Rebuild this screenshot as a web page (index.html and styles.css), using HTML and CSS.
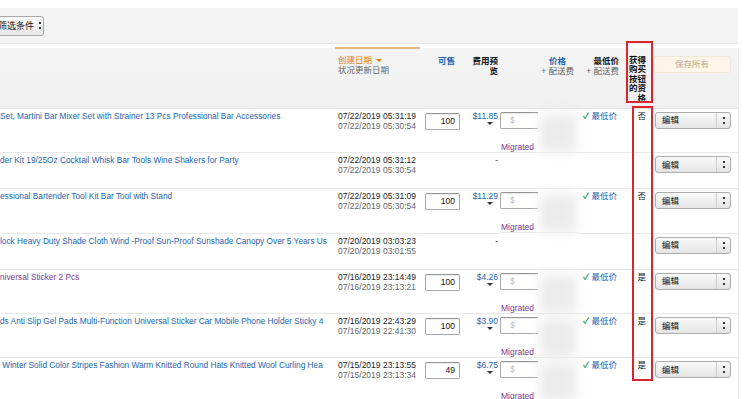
FILE: index.html
```html
<!DOCTYPE html>
<html lang="zh-CN">
<head>
    <meta charset="UTF-8">
    <title>管理库存</title>
    <link rel="stylesheet" href="styles.css">
</head>
<body>
    <div class="page">
        <!-- 工具栏 -->
        <div class="toolbar">
            <div class="filter">筛选条件 <span class="updown"></span></div>
        </div>

        <table class="grid">
            <colgroup>
                <col class="c-title"><col class="c-date"><col class="c-avail"><col class="c-fee">
                <col class="c-price"><col class="c-min"><col class="c-buy"><col class="c-act">
            </colgroup>
            <thead>
                <tr>
                    <th class="title"></th>
                    <th class="date"><span class="sort">创建日期 <i class="caret"></i></span><br><span class="sub">状况更新日期</span></th>
                    <th class="avail"><span class="link">可售</span></th>
                    <th class="fee">费用预<br>览</th>
                    <th class="price"><div class="stack"><span class="link">价格</span><br><span class="sub">+ 配送费</span></div></th>
                    <th class="min">最低价<br><span class="sub">+ 配送费</span></th>
                    <th class="buy">获得<br>购买<br>按钮<br>的资<br>格</th>
                    <th class="act"><div class="save">保存所有</div></th>
                </tr>
            </thead>
            <tbody>
                <tr class="tall">
                    <td><div class="name">Set, Martini Bar Mixer Set with Strainer 13 Pcs Professional Bar Accessories</div></td>
                    <td class="date"><div>07/22/2019 05:31:19</div><div class="old">07/22/2019 05:30:54</div></td>
                    <td class="avail"><div class="box">100</div></td>
                    <td class="fee"><div class="link">$11.85</div><div class="drop"><i class="caret dark"></i></div></td>
                    <td class="price"><div class="pcol"><div class="box money">$</div><div class="migrated">Migrated</div></div><div class="blur"></div></td>
                    <td class="min"><span class="tick">✓</span> <span class="link">最低价</span></td>
                    <td class="buy">否</td>
                    <td class="act"><div class="select"><span>编辑</span><b class="updown"></b></div></td>
                </tr>
                <tr class="short">
                    <td><div class="name">der Kit 19/25Oz Cocktail Whisk Bar Tools Wine Shakers for Party</div></td>
                    <td class="date"><div>07/22/2019 05:31:12</div><div class="old">07/22/2019 05:30:54</div></td>
                    <td class="avail"></td>
                    <td class="fee">-</td>
                    <td class="price"></td>
                    <td class="min"></td>
                    <td class="buy"></td>
                    <td class="act"><div class="select"><span>编辑</span><b class="updown"></b></div></td>
                </tr>
                <tr class="tall">
                    <td><div class="name">essional Bartender Tool Kit Bar Tool with Stand</div></td>
                    <td class="date"><div>07/22/2019 05:31:09</div><div class="old">07/22/2019 05:30:54</div></td>
                    <td class="avail"><div class="box">100</div></td>
                    <td class="fee"><div class="link">$11.29</div><div class="drop"><i class="caret dark"></i></div></td>
                    <td class="price"><div class="pcol"><div class="box money">$</div><div class="migrated">Migrated</div></div><div class="blur"></div></td>
                    <td class="min"><span class="tick">✓</span> <span class="link">最低价</span></td>
                    <td class="buy">否</td>
                    <td class="act"><div class="select"><span>编辑</span><b class="updown"></b></div></td>
                </tr>
                <tr class="short">
                    <td><div class="name">lock Heavy Duty Shade Cloth Wind -Proof Sun-Proof Sunshade Canopy Over 5 Years Us</div></td>
                    <td class="date"><div>07/20/2019 03:03:23</div><div class="old">07/20/2019 03:01:55</div></td>
                    <td class="avail"></td>
                    <td class="fee">-</td>
                    <td class="price"></td>
                    <td class="min"></td>
                    <td class="buy"></td>
                    <td class="act"><div class="select"><span>编辑</span><b class="updown"></b></div></td>
                </tr>
                <tr class="tall">
                    <td><div class="name visited">niversal Sticker 2 Pcs</div></td>
                    <td class="date"><div>07/16/2019 23:14:49</div><div class="old">07/16/2019 23:13:21</div></td>
                    <td class="avail"><div class="box">100</div></td>
                    <td class="fee"><div class="link">$4.26</div><div class="drop"><i class="caret dark"></i></div></td>
                    <td class="price"><div class="pcol"><div class="box money">$</div><div class="migrated">Migrated</div></div><div class="blur"></div></td>
                    <td class="min"><span class="tick">✓</span> <span class="link">最低价</span></td>
                    <td class="buy">是</td>
                    <td class="act"><div class="select"><span>编辑</span><b class="updown"></b></div></td>
                </tr>
                <tr class="tall">
                    <td><div class="name">ds Anti Slip Gel Pads Multi-Function Universal Sticker Car Mobile Phone Holder Sticky 4</div></td>
                    <td class="date"><div>07/16/2019 22:43:29</div><div class="old">07/16/2019 22:41:30</div></td>
                    <td class="avail"><div class="box">100</div></td>
                    <td class="fee"><div class="link">$3.90</div><div class="drop"><i class="caret dark"></i></div></td>
                    <td class="price"><div class="pcol"><div class="box money">$</div><div class="migrated">Migrated</div></div><div class="blur"></div></td>
                    <td class="min"><span class="tick">✓</span> <span class="link">最低价</span></td>
                    <td class="buy">是</td>
                    <td class="act"><div class="select"><span>编辑</span><b class="updown"></b></div></td>
                </tr>
                <tr class="tall">
                    <td><div class="name">&nbsp;Winter Solid Color Stripes Fashion Warm Knitted Round Hats Knitted Wool Curling Hea</div></td>
                    <td class="date"><div>07/15/2019 23:13:55</div><div class="old">07/15/2019 23:13:34</div></td>
                    <td class="avail"><div class="box">49</div></td>
                    <td class="fee"><div class="link">$6.75</div><div class="drop"><i class="caret dark"></i></div></td>
                    <td class="price"><div class="pcol"><div class="box money">$</div><div class="migrated">Migrated</div></div><div class="blur"></div></td>
                    <td class="min"><span class="tick">✓</span> <span class="link">最低价</span></td>
                    <td class="buy">是</td>
                    <td class="act"><div class="select"><span>编辑</span><b class="updown"></b></div></td>
                </tr>
            </tbody>
        </table>

        <!-- 红框标注 -->
        <div class="mark mark-head"></div>
        <div class="mark mark-body"></div>
    </div>
</body>
</html>
```

FILE: styles.css
```css
body {
    margin: 0;
    background: #fff;
    font-family: "Liberation Sans", Arial, "Noto Sans CJK SC", sans-serif;
    font-size: 8.5px;
    color: #333;
    overflow: hidden;
}
.page {
    position: relative;
    width: 738px;
    padding-top: 8px;
}

/* 工具栏 */
.toolbar {
    height: 35px;
    background: #f3f3f3;
    border-bottom: 1px solid #e8e8e8;
    display: flex;
    align-items: center;
}
.filter {
    margin-left: -3px;
    width: 47px;
    height: 20px;
    box-sizing: border-box;
    padding-left: 0;
    border: 1px solid #a9a9a9;
    border-radius: 3px;
    background: linear-gradient(#fbfbfb, #e7e7e7);
    display: flex;
    align-items: center;
    gap: 4px;
    color: #111;
    font-size: 9px;
}
.updown {
    display: inline-block;
    width: 3px;
    height: 7px;
    background:
        linear-gradient(#333, #333) top / 2px 2px no-repeat,
        linear-gradient(#333, #333) bottom / 2px 2px no-repeat;
}

/* 表格 */
.grid {
    margin-top: 3px;
    width: 738px;
    table-layout: fixed;
    border-collapse: collapse;
    border-right: 1px solid #ececec;
}
.c-title { width: 335px; }
.c-date { width: 85px; }
.c-avail { width: 42px; }
.c-fee { width: 38px; }
.c-price { width: 78px; }
.c-min { width: 47px; }
.c-buy { width: 28px; }
.c-act { width: 85px; }

th {
    height: 60px;
    padding: 8px 0 0;
    vertical-align: top;
    font-weight: bold;
    color: #111;
    line-height: 10px;
    background: linear-gradient(#f4f4f4, #f0f0f0);
    border-bottom: 1px solid #e2e2e2;
    box-sizing: border-box;
}
th.date {
    text-align: left;
    padding-left: 3px;
    font-weight: normal;
    border-top: 2px solid #e8b785;
    padding-top: 6px;
}
.sort { color: #e47911; }
.caret {
    display: inline-block;
    width: 0;
    height: 0;
    border-left: 3px solid transparent;
    border-right: 3px solid transparent;
    border-top: 3px solid #e47911;
    vertical-align: middle;
    margin-left: 2px;
}
.caret.dark { border-top-color: #333; vertical-align: top; }
.sub { color: #666; font-weight: normal; }
.link { color: #1b64b0; }
th.avail { text-align: right; padding-right: 7px; }
th.fee { text-align: right; padding-right: 2px; }
th.price { text-align: right; padding-right: 4px; }
.stack { display: inline-block; text-align: center; }
th.min { text-align: right; padding-right: 6px; }
th.buy { text-align: right; padding-right: 7px; line-height: 9.4px; }
th.act { text-align: left; }
.save {
    width: 78px;
    height: 17px;
    box-sizing: border-box;
    border: 1px solid #f2e8d6;
    border-radius: 3px;
    background: #fcf5e8;
    color: #b9aa92;
    font-weight: normal;
    text-align: center;
    line-height: 15px;
}

td {
    padding: 0;
    vertical-align: top;
    line-height: 10px;
    border-bottom: 1px solid #e8e8e8;
}
tr.tall { height: 44px; }
tr.short { height: 36px; }

.name {
    padding-top: 2px;
    white-space: nowrap;
    overflow: hidden;
    color: #1b64b0;
    font-size: 8.3px;
}
.name.visited { color: #823a92; }
td.date { padding: 2px 0 0 3px; color: #222; }
td.date .old { color: #666; }
td.avail { padding: 4px 0 0 5px; }
.box {
    width: 35px;
    height: 17px;
    box-sizing: border-box;
    padding-right: 4px;
    border: 1px solid #a8a8a8;
    border-top-color: #949494;
    border-radius: 2px;
    box-shadow: inset 0 1px 1px rgba(0, 0, 0, 0.08);
    background: #fff;
    text-align: right;
    line-height: 15px;
    color: #111;
}
td.fee { padding: 2px 2px 0 0; text-align: right; }
.drop { padding-right: 5px; line-height: 4px; padding-top: 1px; }
td.price { padding-top: 3px; }
td.price:not(:empty) { display: flex; }
.pcol { width: 38px; }
.box.money {
    width: 38px;
    border-right: none;
    border-radius: 2px 0 0 2px;
    text-align: left;
    padding-left: 9px;
    color: #bbb;
}
.migrated { margin-top: 13px; color: #82368f; padding-left: 1px; }
.blur {
    width: 36px;
    height: 38px;
    margin: 2px 0 0 2px;
    background: #ebebeb;
    filter: blur(6px);
}
td.min { padding: 2px 0 0 5px; }
.tick { color: #3a983a; font-weight: bold; }
td.buy { padding: 2px 7px 0 0; text-align: right; color: #222; }
td.act { padding: 3px 0 0 2px; }
.select {
    width: 76px;
    height: 17px;
    box-sizing: border-box;
    border: 1px solid #adadad;
    border-radius: 3px;
    background: linear-gradient(#f9f9f9, #e4e4e4);
    display: flex;
    align-items: center;
    color: #111;
}
.select span { flex: 1; padding-left: 6px; }
.select .updown {
    width: 13px;
    height: 100%;
    border-left: 1px solid #cdcdcd;
    background:
        linear-gradient(#333, #333) 6px 4px / 2px 2px no-repeat,
        linear-gradient(#333, #333) 6px 9px / 2px 2px no-repeat;
}

/* 红框标注 */
.mark {
    position: absolute;
    border: 2px solid #d7262e;
    box-sizing: border-box;
}
.mark-head { left: 626px; top: 41px; width: 27px; height: 62px; }
.mark-body { left: 632px; top: 106px; width: 21px; height: 275px; }
```
